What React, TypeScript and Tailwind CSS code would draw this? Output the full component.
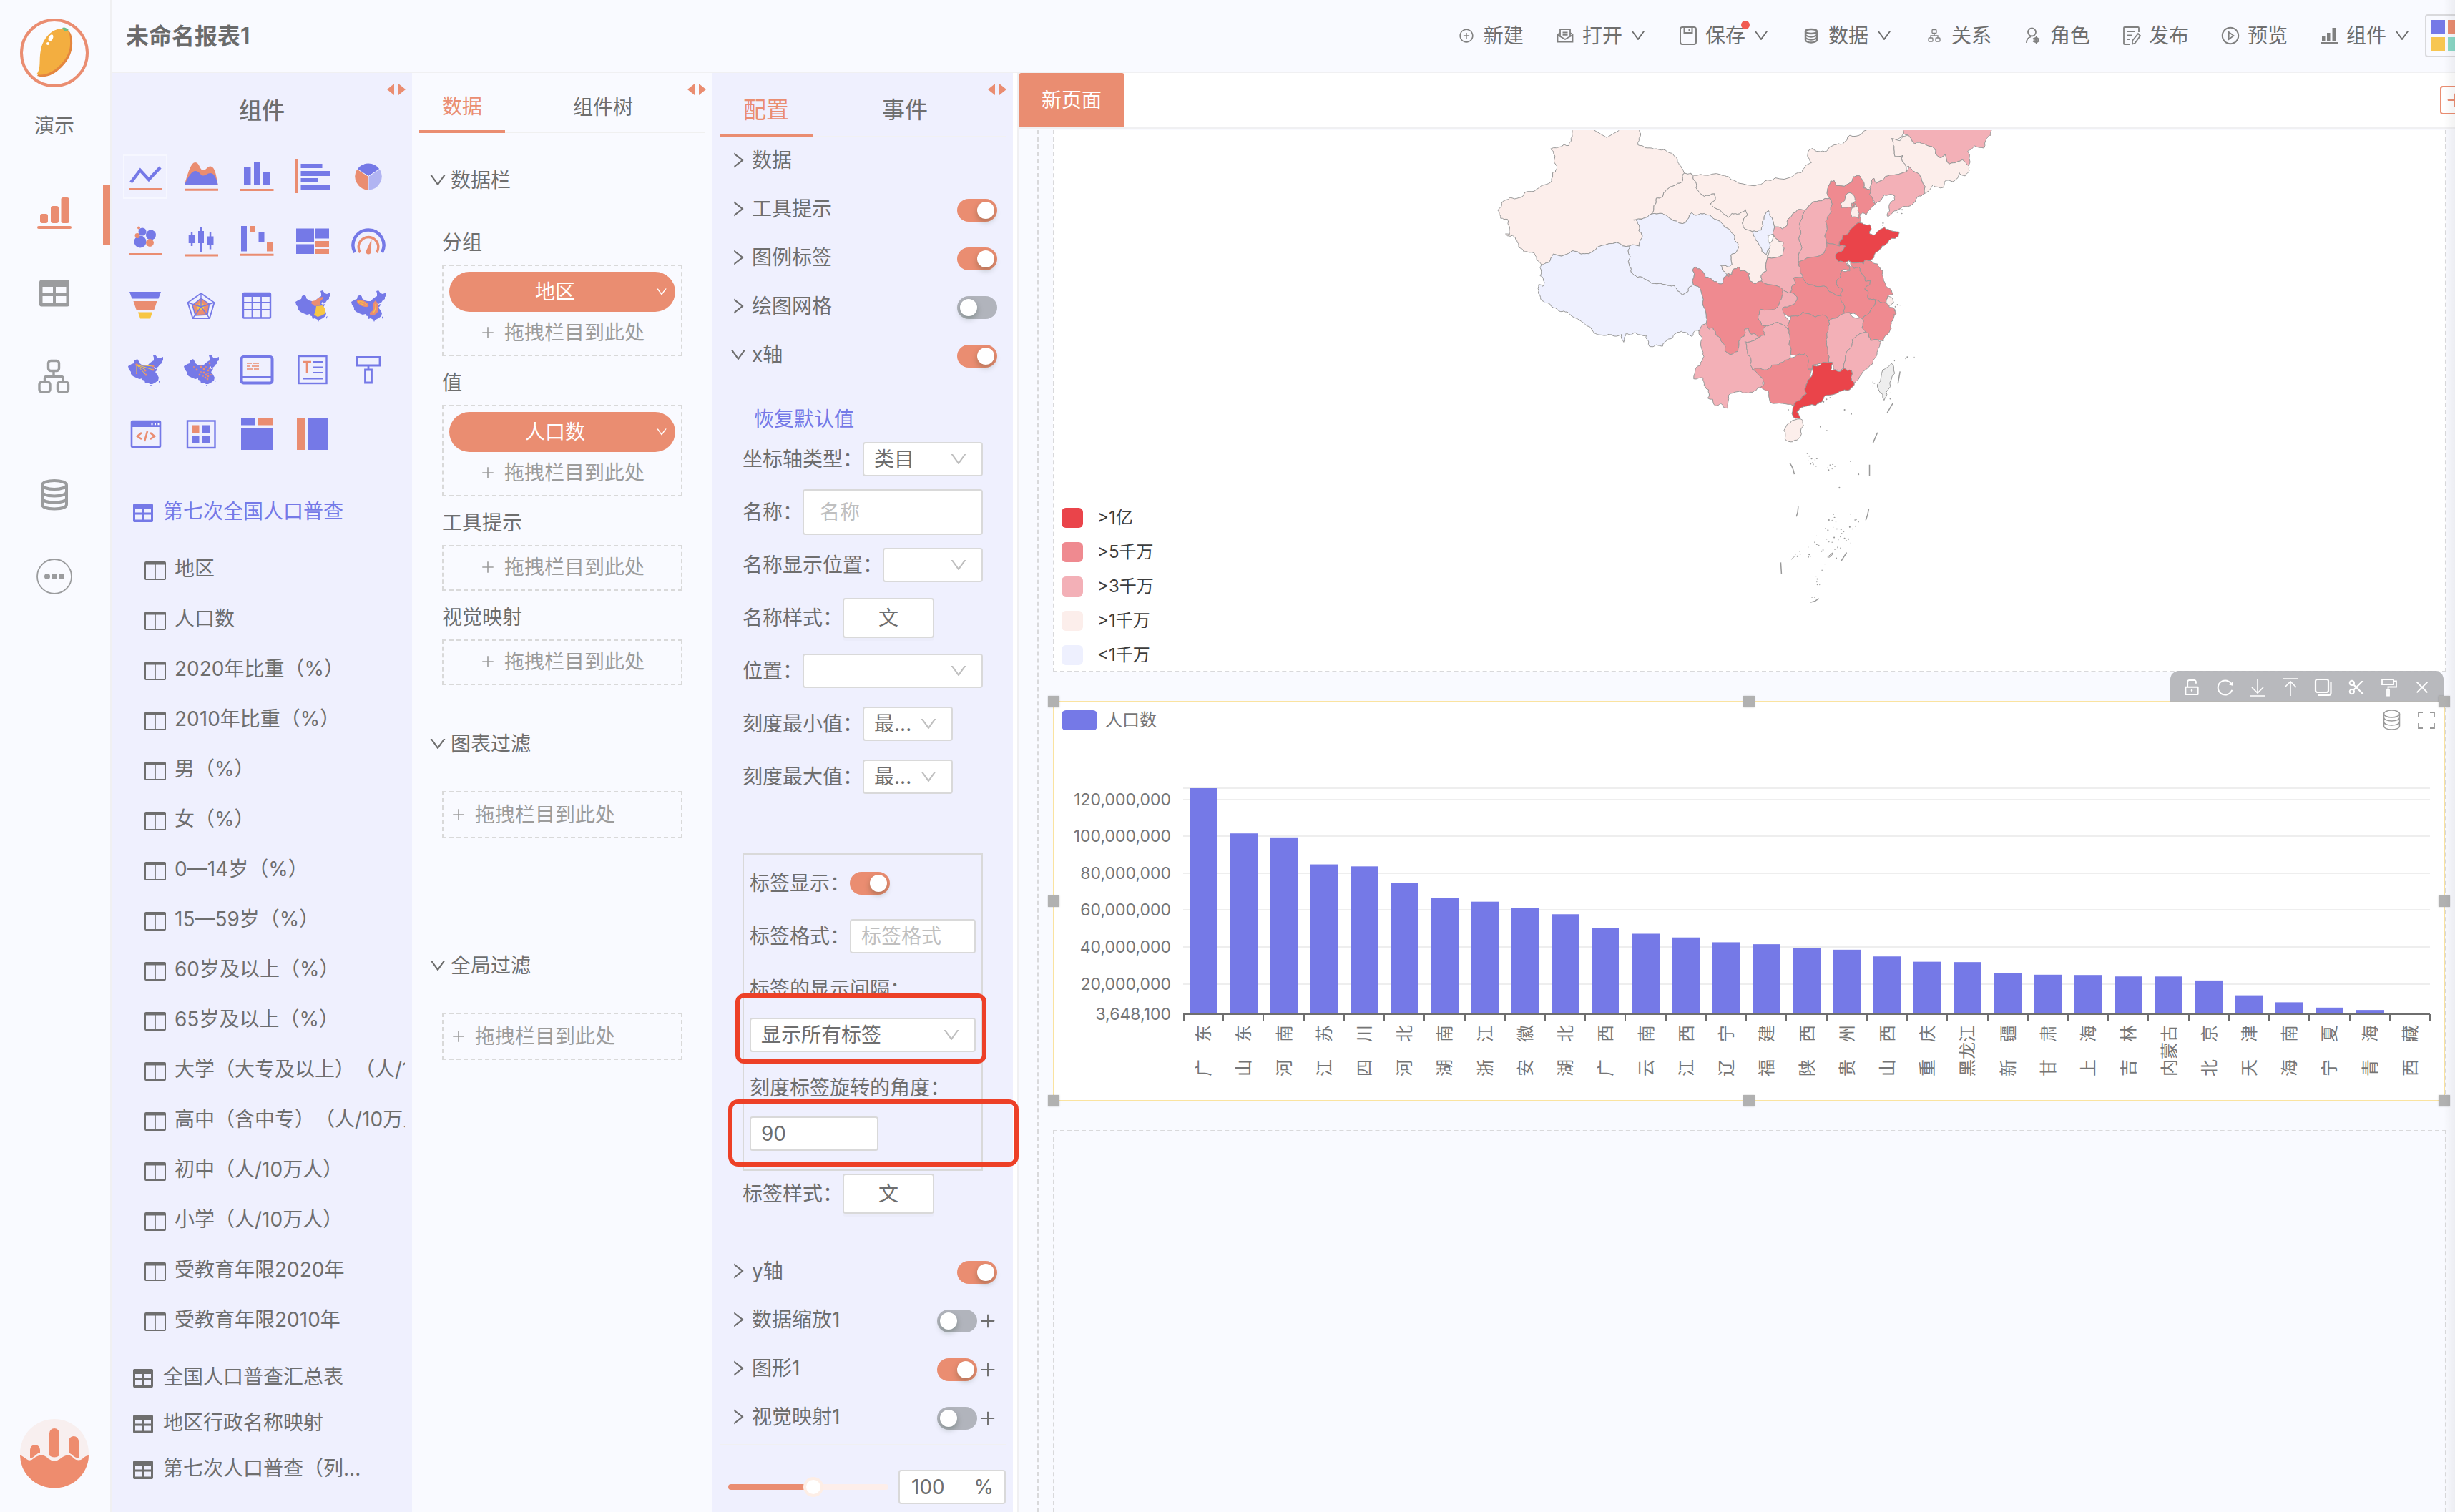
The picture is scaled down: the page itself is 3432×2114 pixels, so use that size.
import React from "react";
import {
  AiOutlineDown,
  AiOutlineRight,
  AiOutlinePlus,
  AiOutlinePlusCircle,
  AiOutlinePlayCircle,
  AiOutlineUnlock,
  AiOutlineReload,
  AiOutlineScissor,
  AiOutlineClose,
} from "react-icons/ai";

const P = "#7579e7";
const O = "#ea8d71";
const Y = "#f7c643";

/* ---------- map of population by province ---------- */

type Region = { id: string; fill: string; pts: string };

const C1 = "#ea444a";
const C2 = "#ef8a90";
const C3 = "#f3b0b7";
const C4 = "#fceeeb";
const C5 = "#eef0fe";

const regions: Region[] = [
  { id: "xinjiang", fill: C4, pts: "288,40 285,68 275,97 262,94 255,100 222,108 230,115 232,145 240,170 236,180 228,182 225,208 205,220 175,240 148,244 142,256 118,264 105,260 82,275 78,290 70,300 78,325 98,328 100,345 104,375 92,374 98,380 112,378 125,395 130,415 145,430 175,434 182,455 196,471 215,464 230,437 262,440 283,427 300,430 310,437 332,436 352,424 370,410 412,401 450,412 480,412 482,392 487,380 476,362 479,352 468,330 490,325 512,312 520,285 527,262 545,258 548,245 562,232 580,222 600,212 603,188 608,184 600,168 588,148 582,132 566,120 548,110 520,108 495,104 474,95 481,68 480,40" },
  { id: "gansu", fill: C4, pts: "608,184 626,184 635,205 642,230 655,248 665,256 695,248 697,268 682,280 690,288 710,298 735,322 745,310 760,312 785,298 790,315 775,340 778,352 803,366 812,385 820,400 832,430 845,438 848,448 892,440 896,418 893,400 872,388 866,378 848,448 845,490 832,500 830,522 812,530 798,522 795,498 770,490 765,478 750,484 745,500 738,508 720,490 712,472 738,478 745,470 742,440 760,425 763,405 750,375 735,358 715,340 695,328 665,310 645,315 628,308 622,315 620,325 612,338 575,332 560,320 545,310 512,312 520,285 527,262 545,258 548,245 562,232 580,222 600,212 603,188" },
  { id: "innermongolia", fill: C4, pts: "626,184 665,190 712,188 735,194 755,208 800,222 812,223 840,208 870,198 920,194 945,182 955,165 975,150 963,130 967,112 978,106 995,115 1018,115 1040,95 1065,92 1085,65 1120,60 1125,52 1237,40 1240,60 1235,70 1210,78 1206,75 1213,100 1216,132 1238,128 1248,165 1250,178 1200,190 1180,205 1162,215 1155,200 1148,205 1145,237 1125,230 1118,200 1110,190 1095,195 1090,212 1045,222 1040,207 1030,208 1022,230 1027,262 1005,270 985,272 965,290 957,300 935,298 910,325 905,345 890,358 868,352 866,345 855,318 850,300 845,305 833,335 830,362 803,366 778,352 775,340 790,315 785,298 760,312 745,310 735,322 710,298 690,288 682,280 697,268 695,248 665,256 655,248 642,230 635,205" },
  { id: "tibet", fill: C5, pts: "196,471 215,464 230,437 262,440 283,427 300,430 310,437 332,436 352,424 370,410 412,401 450,412 446,425 452,445 450,475 455,495 472,510 500,518 530,530 560,535 580,536 588,552 603,564 618,555 622,540 634,532 650,540 663,580 670,620 672,650 660,660 652,680 640,676 630,695 610,682 588,682 575,698 552,712 545,726 508,727 505,712 498,692 480,690 466,682 455,690 440,685 433,713 428,688 405,694 390,688 362,690 345,680 320,655 300,640 270,618 250,617 230,605 205,590 193,572 186,545 188,532 200,538 204,525 192,505 192,480" },
  { id: "qinghai", fill: C5, pts: "460,330 490,325 512,312 545,310 560,320 575,332 612,338 620,325 622,315 628,308 645,315 665,310 695,328 715,340 735,358 750,375 763,405 760,425 742,440 745,470 738,478 712,472 720,490 732,505 722,510 720,528 708,530 690,520 668,510 655,485 640,478 632,488 634,532 622,540 618,555 603,564 588,552 580,536 560,535 530,530 500,518 472,510 455,495 450,475 452,445 446,425 450,412 480,412 482,392 487,380 476,362 479,352 468,330" },
  { id: "ningxia", fill: C5, pts: "850,300 855,318 866,345 864,375 848,378 850,398 856,410 848,425 845,438 832,430 820,400 812,385 803,366 830,362 833,335 845,305" },
  { id: "heilongjiang", fill: C3, pts: "1237,40 1240,60 1262,75 1272,92 1300,92 1328,105 1345,135 1360,125 1372,155 1395,148 1410,142 1428,160 1425,115 1445,98 1472,105 1480,75 1492,65 1495,40" },
  { id: "jilin", fill: C4, pts: "1206,75 1213,100 1216,132 1238,128 1248,165 1255,162 1278,182 1292,205 1300,248 1312,240 1325,220 1355,228 1360,208 1382,210 1398,195 1400,180 1418,192 1428,180 1428,160 1410,142 1395,148 1372,155 1360,125 1345,135 1328,105 1300,92 1272,92 1262,75 1250,65 1237,68 1230,82" },
  { id: "liaoning", fill: C3, pts: "1155,200 1162,215 1180,205 1200,190 1250,178 1255,162 1278,182 1292,205 1300,248 1280,258 1262,285 1240,288 1225,298 1205,312 1195,320 1192,315 1200,300 1198,288 1215,268 1215,255 1200,250 1185,252 1172,272 1158,280 1150,262 1142,250 1145,237 1148,205" },
  { id: "hebei", fill: C2, pts: "1022,230 1030,208 1040,207 1045,222 1090,212 1095,195 1110,190 1118,200 1125,230 1145,237 1142,250 1158,280 1145,295 1132,315 1122,308 1115,312 1112,338 1092,355 1065,378 1055,398 1055,412 1018,402 1020,360 1015,335 1020,320 1032,305 1034,280 1027,262" },
  { id: "beijing", fill: C4, pts: "1085,245 1098,255 1102,270 1090,292 1060,292 1058,278 1070,270 1072,255" },
  { id: "tianjin", fill: C4, pts: "1102,278 1110,292 1112,310 1112,325 1092,322 1090,295 1100,290" },
  { id: "shanxi", fill: C3, pts: "957,300 965,290 985,272 1005,270 1027,262 1034,280 1032,305 1020,320 1015,335 1020,360 1018,402 1015,425 1005,438 970,448 938,462 937,440 945,410 940,380 942,350 948,325" },
  { id: "shaanxi", fill: C3, pts: "935,298 957,300 948,325 942,350 940,380 945,410 937,440 938,462 942,480 950,510 922,512 928,530 918,538 915,558 892,548 870,535 830,522 832,500 845,490 848,448 892,440 896,418 893,400 872,388 866,378 868,352 890,358 905,345 910,325" },
  { id: "shandong", fill: C1, pts: "1112,338 1130,345 1142,345 1147,358 1142,372 1155,378 1170,362 1185,352 1200,362 1227,368 1225,382 1205,388 1195,402 1178,412 1170,425 1158,435 1145,458 1132,455 1125,468 1100,465 1082,458 1072,462 1052,462 1044,440 1058,430 1072,412 1055,412 1055,398 1065,378 1092,355" },
  { id: "henan", fill: C2, pts: "1018,402 1055,412 1072,412 1058,430 1044,440 1052,462 1072,462 1088,480 1062,488 1058,510 1048,518 1052,540 1065,548 1060,568 1040,562 1018,540 985,538 960,528 950,510 942,480 938,462 970,448 1005,438 1015,425" },
  { id: "jiangsu", fill: C2, pts: "1082,458 1100,465 1125,468 1132,455 1145,458 1165,468 1180,490 1188,530 1205,550 1210,562 1195,568 1190,590 1172,588 1158,580 1140,578 1138,555 1128,545 1140,535 1145,520 1130,522 1120,500 1112,478 1098,482" },
  { id: "anhui", fill: C2, pts: "1078,465 1098,482 1112,478 1120,500 1130,522 1145,520 1140,535 1128,545 1138,555 1140,578 1158,580 1145,612 1122,640 1095,622 1072,625 1070,600 1060,568 1065,548 1052,540 1048,518 1058,510 1062,488 1085,490" },
  { id: "zhejiang", fill: C2, pts: "1158,580 1172,588 1190,590 1215,610 1218,625 1205,650 1205,670 1192,690 1182,710 1165,705 1145,708 1138,685 1120,668 1122,640 1145,612" },
  { id: "shanghai", fill: C4, pts: "1195,568 1208,575 1212,590 1200,598 1190,590" },
  { id: "hubei", fill: C2, pts: "922,512 950,510 960,528 985,538 1018,540 1040,562 1060,568 1070,600 1072,625 1050,635 1025,648 1015,630 985,635 970,625 950,618 935,632 915,632 897,625 892,605 915,598 932,582 930,568 915,558 918,538 928,530" },
  { id: "chongqing", fill: C3, pts: "892,548 915,558 930,568 932,582 915,598 892,605 897,625 912,645 910,678 895,660 878,650 860,658 845,662 830,660 820,638 828,610 850,612 868,612 882,590 892,562" },
  { id: "sichuan", fill: C2, pts: "634,532 632,488 640,478 655,485 668,510 690,520 708,530 720,528 722,510 745,500 750,484 765,478 770,490 795,498 798,522 812,530 830,522 870,535 892,548 892,562 882,590 868,612 850,612 828,610 820,638 830,660 845,662 835,672 840,692 822,698 815,690 800,688 792,668 782,672 780,695 765,710 762,742 740,752 725,740 718,715 700,692 690,668 680,672 672,650 670,620 663,580 650,540" },
  { id: "yunnan", fill: C3, pts: "672,650 680,672 690,668 700,692 718,715 725,740 740,752 762,742 765,710 780,695 782,672 792,668 800,688 815,690 822,698 810,708 782,712 790,740 800,765 805,800 822,815 838,830 835,848 820,855 805,870 780,872 762,868 735,880 733,920 722,918 712,905 698,912 690,892 675,888 678,862 665,850 662,825 635,828 640,795 660,770 662,745 660,700 650,680 660,660" },
  { id: "guizhou", fill: C3, pts: "845,662 860,658 878,650 895,660 910,678 912,690 910,720 915,752 912,768 885,778 860,785 845,800 820,795 805,800 800,765 790,740 782,712 810,708 822,698 840,692 835,672" },
  { id: "hunan", fill: C2, pts: "915,632 935,632 950,618 970,625 985,635 1015,630 1025,648 1022,680 1017,705 1022,740 1025,778 1000,780 978,785 975,798 965,798 955,750 935,752 915,752 910,720 912,690 910,678 912,645" },
  { id: "jiangxi", fill: C3, pts: "1025,648 1050,635 1085,620 1095,635 1122,640 1120,668 1130,682 1110,690 1092,705 1088,730 1072,760 1068,795 1058,802 1040,800 1030,778 1025,778 1022,740 1017,705 1022,680" },
  { id: "fujian", fill: C3, pts: "1130,682 1138,685 1145,708 1165,705 1175,712 1165,740 1160,760 1150,782 1130,800 1110,830 1098,840 1090,802 1068,795 1072,760 1088,730 1092,705 1110,690" },
  { id: "guangxi", fill: C2, pts: "805,800 820,795 845,800 860,785 885,778 915,762 935,752 955,750 965,798 975,798 972,825 960,845 960,875 940,895 922,912 890,905 855,900 850,865 828,855 838,840 835,828 822,815" },
  { id: "guangdong", fill: C1, pts: "978,785 1000,785 1008,776 1038,778 1030,800 1055,805 1068,795 1090,802 1098,840 1085,862 1055,868 1015,880 1005,900 965,912 940,922 932,932 942,948 940,953 928,952 920,930 925,905 940,895 960,875 960,845 972,825" },
  { id: "hainan", fill: C4, pts: "905,970 920,958 950,958 952,975 942,1010 920,1025 898,1015 895,990" },
  { id: "taiwan", fill: "#eeeeee", pts: "1205,780 1212,790 1205,830 1190,870 1184,895 1168,862 1165,845 1180,800" },
];

type Pt = [number, number];

/* Adds small notches to a straight border. The result does not depend on the
   direction of travel, so neighbouring provinces share the same line. */
function roughen(a: Pt, b: Pt, depth: number): Pt[] {
  const len = Math.hypot(b[0] - a[0], b[1] - a[1]);
  if (depth === 0 || len < 7) return [b];
  const flip = a[0] > b[0] || (a[0] === b[0] && a[1] > b[1]);
  const [p, q] = flip ? [b, a] : [a, b];
  const s = Math.sin(p[0] * 12.98 + p[1] * 78.23 + q[0] * 37.71 + q[1] * 9.17) * 43758.5;
  const k = (s - Math.floor(s) - 0.5) * 0.34;
  const m: Pt = [
    (p[0] + q[0]) / 2 - (q[1] - p[1]) * k,
    (p[1] + q[1]) / 2 + (q[0] - p[0]) * k,
  ];
  return [...roughen(a, m, depth - 1), ...roughen(m, b, depth - 1)];
}

function outline(pts: string) {
  const list = pts.split(" ").map((s) => s.split(",").map(Number) as Pt);
  const out: Pt[] = [list[0]];
  list.forEach((p, i) => out.push(...roughen(p, list[(i + 1) % list.length], 2)));
  return "M" + out.map(([x, y]) => `${x.toFixed(1)} ${y.toFixed(1)}`).join("L") + "Z";
}

const seaLines =
  "M1230 805L1224 843M1209 905L1193 934M1165 996L1152 1029M1142 1097V1131M1140 1235Q1137 1255 1131 1271M1076 1372L1060 1399M996 1516L985 1524L972 1528M886 1403L888 1438M936 1226Q937 1244 931 1259M912 1092Q922 1106 925 1127";

const islets =
  "963,1062 968,1070 966,1085 975,1078 978,1090 985,1082 990,1078 980,1096 988,1102 972,1094 1022,1105 1028,1098 1036,1096 1042,1102 1034,1110 1024,1114 1087,1087 1111,1127 1055,1168 1000,978 1019,989 1070,925 1069,928 1090,938 908,925 1214,771 1246,765 1251,760 1271,760 1152,838 1156,842 1152,850 1201,872 1202,890 1228,295 1236,298 1235,310 1222,306 1220,300 1181,340 1180,347 1216,602 1230,597 1222,596 1214,615 1218,622 1213,626 1038,1252 1041,1262 1034,1272 1045,1276 1025,1270 1088,1253 1100,1270 1110,1276 1104,1268 1015,1296 1022,1302 1037,1293 1048,1298 1060,1300 1068,1306 1062,1312 1085,1292 1092,1298 1102,1290 1018,1330 1025,1338 1034,1340 1040,1325 1052,1332 1058,1322 1075,1335 1082,1330 1088,1342 1070,1328 989,1320 984,1340 990,1347 996,1350 965,1355 968,1378 972,1384 966,1386 1008,1364 1004,1368 928,1378 934,1384 940,1368 942,1378 1042,1362 1050,1356 1058,1358 1046,1390 1013,1408 1005,1428 988,1446 991,1455 990,1464 992,1472 998,1473 976,1512 984,1512 1022,880 1028,886 1018,892 995,905 1010,900";

function ChinaMap() {
  return (
    <svg
      viewBox="0 49 1568 1519"
      preserveAspectRatio="none"
      className="h-[678px] w-[760px]"
      role="img"
      aria-label="人口数地图"
    >
      <g stroke="#999999" strokeWidth="1" strokeLinejoin="round">
        {regions.map((r) => (
          <path key={r.id} d={outline(r.pts)} fill={r.fill} vectorEffect="non-scaling-stroke" />
        ))}
      </g>
      <path d="M1090 278l8 0l-2 12l-6 -3z M733 497l5 2l-2 9l-4 -4z" fill={C2} stroke="#999" vectorEffect="non-scaling-stroke" />
      <path d="M1021 1386L1035 1373L1034 1380L1026 1387ZM916 1394L926 1384" fill="#e5e0e0" stroke="#999" vectorEffect="non-scaling-stroke" />
      <path d={seaLines} fill="none" stroke="#999999" strokeWidth="1.500" vectorEffect="non-scaling-stroke" />
      {islets.split(" ").map((s, i) => {
        const [x, y] = s.split(",").map(Number);
        return <ellipse key={i} cx={x} cy={y} rx={i % 3 ? 1.4 : 2.2} ry={i % 2 ? 2.4 : 1.5} fill="#999999" />;
      })}
    </svg>
  );
}

const mapLegend = [
  { label: ">1亿", box: "bg-[#ea444a]" },
  { label: ">5千万", box: "bg-[#ef8a90]" },
  { label: ">3千万", box: "bg-[#f3b0b7]" },
  { label: ">1千万", box: "bg-[#fceeeb]" },
  { label: "<1千万", box: "bg-[#eef0fe]" },
];

/* ---------- bar chart ---------- */

const population: [string, number][] = [
  ["广　东", 126012510], ["山　东", 101527453], ["河　南", 99365519], ["江　苏", 84748016],
  ["四　川", 83674866], ["河　北", 74610235], ["湖　南", 66444864], ["浙　江", 64567588],
  ["安　徽", 61027171], ["湖　北", 57752557], ["广　西", 50126804], ["云　南", 47209277],
  ["江　西", 45188635], ["辽　宁", 42591407], ["福　建", 41540086], ["陕　西", 39528999],
  ["贵　州", 38562148], ["山　西", 34915616], ["重　庆", 32054159], ["黑龙江", 31850088],
  ["新　疆", 25852345], ["甘　肃", 25019831], ["上　海", 24870895], ["吉　林", 24073453],
  ["内蒙古", 24049155], ["北　京", 21893095], ["天　津", 13866009], ["海　南", 10081232],
  ["宁　夏", 7202654], ["青　海", 5923957], ["西　藏", 3648100],
];

function BarChart() {
  const left = 180;
  const right = 1923;
  const base = 379;
  const top = 63;
  const min = 3648100;
  const max = 126012510;
  const yOf = (v: number) => base - ((v - min) / (max - min)) * (base - top);
  const step = (right - left) / population.length;
  const ticks = [120000000, 100000000, 80000000, 60000000, 40000000, 20000000, min];
  return (
    <svg viewBox="0 0 1942 499" className="block w-full" role="img" aria-label="各地区人口数柱状图">
      <g fill="#eeeeee">
        <rect x={left} y={top - 1} width={right - left} height="2" />
        {ticks.slice(0, 6).map((t) => (
          <rect key={t} x={left} y={Math.round(yOf(t)) - 1} width={right - left} height="2" />
        ))}
      </g>
      <g fill={P}>
        {population.map(([name, v], i) => (
          <rect key={name} x={Math.round(left + i * step + 9)} y={yOf(v)} width="39" height={base - yOf(v)} />
        ))}
      </g>
      <g fill="#6e6e6e">
        <rect x={left} y={base - 1} width={right - left} height="2" />
        {Array.from({ length: population.length + 1 }, (_, i) => (
          <rect key={i} x={Math.round(left + i * step) - (i ? 1 : 0)} y={base} width="2" height="10" />
        ))}
      </g>
      <g fill="#757575" fontSize="23" textAnchor="end">
        {ticks.map((t) => (
          <text key={t} x={left - 17} y={yOf(t) + 8}>
            {t.toLocaleString("en-US")}
          </text>
        ))}
      </g>
      <g fill="#757575" fontSize="24" textAnchor="end">
        {population.map(([name], i) => (
          <text key={name} transform={`translate(${left + (i + 0.5) * step + 9} ${base + 15}) rotate(-90)`}>
            {name}
          </text>
        ))}
      </g>
    </svg>
  );
}

/* ---------- component palette icons ---------- */

const china =
  "M0 19L5 16L8 15L9 11L13 9L15 12L15 14L19 17L23 18L27 18L30 15L34 12L36 11L36 7L35 4L38 3L41 7L44 8L49 6L49 11L47 12L47 15L44 17L42 20L38 22L38 19L36 21L38 23L41 22L40 25L38 27L41 31L43 35L42 39L38 42L34 44L31 44L27 42L24 43L23 39L20 38L20 36L16 37L11 35L7 33L4 30L4 27L1 23ZM31 45L33 45L32 47ZM43 40L45 39L43 43Z";

const palette: { name: string; art: React.ReactNode }[] = [
  { name: "折线图", art: <><path d="M4 32L17 15L29 28L45 11" fill="none" stroke={P} strokeWidth="4.4" /><path d="M1 41.5H48" stroke={O} strokeWidth="3" /></> },
  { name: "面积图", art: <><path d="M1 35C6 18 10 4 16 4C22 4 22 15 27 15C31 15 33 9.500 37 9.500C44 9.500 46 26 47.500 35Z" fill={O} /><path d="M1 35C6 24 11 16 16 16C22 16 23 22.500 27 22.500C31 22.500 33 19 37 19C43 19 46 28 47.500 35Z" fill={P} /><path d="M1 42.300H48" stroke={O} strokeWidth="3" /></> },
  { name: "柱状图", art: <><path d="M6 11h9.500v25H6zM20 3h9v33h-9zM33 18h9v18h-9z" fill={P} /><path d="M1 42.500H47.500" stroke={O} strokeWidth="3" /></> },
  { name: "条形图", art: <><path d="M-1 0h4v47h-4z" fill={O} /><path d="M7.500 6h30v6h-30zM7.500 16h41v7h-41zM7.500 26h24.500v6H7.500zM7.500 36h41v6h-41z" fill={P} /></> },
  { name: "饼图", art: <><path d="M24 23.500L8.500 13.500A19 19 0 0 1 39.500 13.500Z" fill={P} /><path d="M24 23.500V42.500A19 19 0 0 1 8.200 13.500Z" fill={O} /><path d="M24 23.500V42.500A19 19 0 0 0 39.800 13.500Z" fill="#b1b4f2" /><path d="M24 43V23.500M8 13L24 23.500L40 13" fill="none" stroke="#eff0fe" strokeWidth="1" /></> },
  { name: "散点图", art: <><circle cx="17" cy="25" r="8.500" fill={P} /><circle cx="32" cy="15.500" r="7" fill={P} /><circle cx="20" cy="11" r="5.500" fill={P} /><circle cx="30.500" cy="26.500" r="5.400" fill={O} /><circle cx="13" cy="16.500" r="3.400" fill={O} /><circle cx="15" cy="5.500" r="2" fill={O} /><path d="M1 42.500H48" stroke={O} strokeWidth="3" /></> },
  { name: "K线图", art: <><path d="M6.700 15h8.500v12H6.700zM9.800 12h2.500v19H9.800zM20 10h8v17h-8zM22.700 4h2.600v36h-2.600zM32.500 17.500h9v12h-9zM35.800 11h2.500v24.500h-2.500z" fill={P} /><path d="M1 44H48" stroke={O} strokeWidth="3" /></> },
  { name: "瀑布图", art: <><path d="M2 3h8v35.500H2zM26.500 11h8v15h-8z" fill={P} /><path d="M14.500 3h7.500v9h-7.500zM38 25.500h8v13h-8z" fill={O} /><path d="M1 43.300H47.500" stroke={O} strokeWidth="3" /></> },
  { name: "矩形树图", art: <><path d="M1 6.500h25v19H1zM1 28.500h25V42H1zM28 6.500h19v14H28z" fill={P} /><path d="M28 24h19v8.500H28zM28 35h19v7H28z" fill={O} /></> },
  { name: "仪表盘", art: <><path d="M5 40A21.500 21.500 0 1 1 43 40" fill="none" stroke={P} strokeWidth="4.400" /><path d="M12.500 40A13.800 13.800 0 1 1 35.500 40" fill="none" stroke={O} strokeWidth="3.400" /><path d="M28.500 21L27.500 40A3.600 3.600 0 0 1 20.500 38.500Z" fill={O} /></> },
  { name: "漏斗图", art: <><path d="M2 5H46L42.500 14.500H5.500Z" fill={P} /><path d="M7.500 18H40.500L36.500 30H11.500Z" fill={O} /><path d="M14 33.500H34L31 42.500H17Z" fill={Y} /></> },
  { name: "雷达图", art: <><path d="M24 7L42.500 20L36 42H12.500L5.500 20Z" fill="none" stroke={P} strokeWidth="1.800" /><path d="M24 14L35.500 22L33 37L16 38L12 24Z" fill={O} stroke={P} strokeWidth="1.500" /><path d="M24 19L29 24L27 30L20 31L18 25Z" fill={Y} /><path d="M24 7V26L42.500 20M24 26L36 42M24 26L12.500 42M24 26L5.500 20" fill="none" stroke={P} strokeWidth="1.400" /></> },
  { name: "表格", art: <><rect x="5" y="7" width="38" height="34.500" rx="1" fill="none" stroke={P} strokeWidth="2.400" /><path d="M4 6H44V12H4Z" fill={P} /><path d="M5 20H43M5 30H43M17.500 12V41M30 12V41" stroke={P} strokeWidth="1.800" /></> },
  { name: "区域地图", art: <><path d={china} fill={P} /><path d="M23 18L28 17L33 13L39 12L38 15L35 18L34 24L27 25L22 21Z" fill={O} /><path d="M29 25L38 24L42 29L42 35L37 38L31 40L26 37L28 32Z" fill={Y} /></> },
  { name: "热力地图", art: <><path d={china} fill={P} /><ellipse cx="16" cy="21" rx="9" ry="3.800" transform="rotate(25 16 21)" fill={O} /><ellipse cx="16" cy="21" rx="6" ry="1.600" transform="rotate(25 16 21)" fill="none" stroke={Y} strokeWidth="1" /><path d="M34 17Q38 21 38 30Q37 36 30 38Q25 38 26 34Q33 31 30 25Q30 20 34 17Z" fill={O} /><path d="M34 22Q35 30 30 35" fill="none" stroke={Y} strokeWidth="1.300" /></> },
  { name: "路径地图", art: <><path d={china} fill={P} /><path d="M12 17L35 19M12 17L35 24M12 17L24 24M12 17L25 31M12 17L12 29" stroke={Y} strokeWidth="1" /><g fill={O}><circle cx="12" cy="17" r="1.800" /><circle cx="35" cy="19" r="1.500" /><circle cx="35" cy="24" r="1.500" /><circle cx="24" cy="25" r="1.500" /><circle cx="25" cy="31" r="1.500" /><circle cx="12" cy="29" r="1.200" /></g></> },
  { name: "散点地图", art: <><path d={china} fill={P} /><g fill={O}>{["14,20", "18,24", "24,20", "24,27", "28,23", "28,28", "31,20", "31,31", "34,25", "34,29", "30,35", "36,22", "38,31", "33,37", "22,31", "27,33", "36,15", "34,33"].map((s, i) => { const [x, y] = s.split(","); return <circle key={s} cx={x} cy={y} r={i % 3 === 0 ? 0.9 : 1.4} />; })}</g></> },
  { name: "标签卡", art: <><rect x="2.500" y="6" width="43" height="36.500" rx="3" fill="none" stroke={P} strokeWidth="4" /><path d="M3 34H45" stroke={P} strokeWidth="2" /><path d="M10 15H17M19 15H27M10 19H15M17 19H27M10 23H18M20 23H27" stroke={O} strokeWidth="1.500" /></> },
  { name: "文本", art: <><rect x="4.500" y="5" width="39" height="38" fill="none" stroke={P} strokeWidth="2.400" /><path d="M10 13H22M16 13V29" stroke={O} strokeWidth="2.600" fill="none" /><path d="M24 13H39M24 20.500H39M24 28H39M10 36.500H39" stroke={P} strokeWidth="2" /></> },
  { name: "格式刷", art: <path d="M8 6.500H40V18H8ZM24 18V24M19.500 24H28.500V42H19.500Z" fill="none" stroke={P} strokeWidth="2.800" /> },
  { name: "网页", art: <><rect x="5" y="6" width="40" height="36" rx="1.500" fill="none" stroke={P} strokeWidth="2.600" /><path d="M4 5.500H46V14H4Z" fill={P} /><path d="M32.500 10h2M37 10h2M41.500 10h2" stroke="#fff" strokeWidth="2.400" /><path d="M19 22L13 27L19 31M31 22L37 27L31 31M27 20L23 34" fill="none" stroke={O} strokeWidth="2.600" /></> },
  { name: "宫格", art: <><rect x="5" y="5.500" width="38.500" height="37.500" fill="none" stroke={P} strokeWidth="2.400" /><path d="M11.500 11.500h10V22h-10z" fill={O} /><path d="M26 11.500h11V22H26zM11.500 26.500h10V37h-10zM26 26.500h11V37H26z" fill={P} /></> },
  { name: "标签页", art: <><path d="M2 2h19v9.500H2zM2 15.500h44V46H2z" fill={P} /><path d="M25 2h21v9.500H25z" fill={O} /></> },
  { name: "侧栏", art: <><path d="M2 2h12v44H2z" fill={O} /><path d="M17 2h29v44H17z" fill={P} /></> },
];

function CollapseArrows() {
  return (
    <button type="button" aria-label="折叠面板" className="absolute top-[15px] right-[9px]">
      <svg width="26" height="16" viewBox="0 0 26 16" fill={O}>
        <path d="M0 8L10 0V16ZM26 8L16 0V16Z" />
      </svg>
    </button>
  );
}

/* ---------- left rail ---------- */

function Rail() {
  const btn = "relative flex h-[84px] w-full items-center justify-center pr-[2px] text-[#9b9c9e]";
  return (
    <nav className="flex w-[156px] shrink-0 flex-col items-center border-r-2 border-[#f0f0f2]">
      <svg width="96" height="96" viewBox="0 0 96 96" className="mt-[26px] mr-[2px] shrink-0" role="img" aria-label="头像">
        <circle cx="48" cy="48" r="46" fill="#f9faff" stroke={O} strokeWidth="4" />
        <path d="M24 80C32 70 27 58 30 44C33 28 45 14 60 14C68 14 72 20 73 30C74 44 70 56 58 68C48 78 36 84 24 80Z" fill="#e4863f" />
        <path d="M23 78C30 70 26 58 29 44C32 28 44 14 59 14C67 14 70 20 70 30C71 43 67 54 56 65C46 75 35 80 23 78Z" fill="#f3ae40" />
        <path d="M59 13Q63 11 68 16L62 18Z" fill="#6cbf84" />
        <ellipse cx="43" cy="27" rx="3" ry="5" fill="#fff" transform="rotate(25 43 27)" />
        <circle cx="39" cy="35" r="2" fill="#fff" />
      </svg>
      <span className="mt-8 mr-[2px] text-[28px] leading-[44px]">演示</span>
      <div className="mt-[60px] flex w-full flex-col gap-[29px]">
        <button type="button" aria-label="图表" className={btn}>
          <svg width="48" height="48" viewBox="0 0 48 48" fill={O}>
            <rect x="4" y="23" width="11" height="13" rx="3" /><rect x="19" y="12" width="11" height="24" rx="3" /><rect x="33.500" y="0" width="11" height="36" rx="2.500" /><rect x="0" y="40" width="48" height="4" rx="2" />
          </svg>
          <span className="absolute inset-y-0 right-0 w-[10px] bg-[#ea8d71]" />
        </button>
        <button type="button" aria-label="表格" className={btn}>
          <svg width="48" height="48" viewBox="0 0 48 48" fill="currentColor">
            <path fillRule="evenodd" d="M6 2.500H42Q45 2.500 45 5.500V36.500Q45 39.500 42 39.500H6Q3 39.500 3 36.500V5.500Q3 2.500 6 2.500ZM7.500 12V21H22V12ZM26 12V21H40.500V12ZM7.500 25V35H22V25ZM26 25V35H40.500V25Z" />
          </svg>
        </button>
        <button type="button" aria-label="关系" className={btn}>
          <svg width="48" height="48" viewBox="0 0 48 48" fill="none" stroke="currentColor" strokeWidth="3.400">
            <rect x="15.500" y="2.500" width="15" height="14" rx="3.500" /><rect x="3" y="32" width="15" height="14" rx="3.500" /><rect x="28.500" y="32" width="15" height="14" rx="3.500" /><path d="M23 17V24M10.500 31V27Q10.500 24.500 13 24.500H33.500Q36 24.500 36 27V31" />
          </svg>
        </button>
      </div>
      <div className="mt-[82px] flex w-full flex-col gap-[30px]">
        <button type="button" aria-label="数据" className={btn}>
          <svg width="48" height="48" viewBox="0 0 48 48" fill="none" stroke="currentColor" strokeWidth="4">
            <ellipse cx="24" cy="10" rx="17" ry="6" /><path d="M7 10V37C7 41.500 15 43.500 24 43.500S41 41.500 41 37V10M7 19C7 23.500 15 25.500 24 25.500S41 23.500 41 19M7 28C7 32.500 15 34.500 24 34.500S41 32.500 41 28" />
          </svg>
        </button>
        <button type="button" aria-label="更多" className={btn}>
          <svg width="50" height="50" viewBox="0 0 50 50">
            <circle cx="25" cy="25" r="24" fill="none" stroke="currentColor" strokeWidth="1.800" /><g fill="currentColor"><circle cx="15" cy="25" r="4" /><circle cx="25" cy="25" r="4" /><circle cx="35" cy="25" r="4" /></g>
          </svg>
        </button>
      </div>
      <svg width="96" height="96" viewBox="0 0 96 96" className="mt-auto mr-[2px] mb-[34px] shrink-0" role="img" aria-label="标志">
        <circle cx="48" cy="48" r="48" fill="#f8efef" />
        <path d="M0 50Q5 53 9 56Q14 60 19 55Q31 46 39 55Q48 62 57 55Q68 46 75 55Q82 60 88 55Q92 51 96 51A48 46 0 0 1 0 50Z" fill="#ee8c6e" />
        <path d="M14 54V43A7 7 0 0 1 28 43V47Q24 48 20 52Q17 55 14 54ZM41 51V20A7 7 0 0 1 55 20V51Q48 56 41 51ZM68 47V31A7 7 0 0 1 82 31V54Q79 55 75 52Q72 49 68 47Z" fill="#ee8c6e" />
      </svg>
    </nav>
  );
}

/* ---------- header ---------- */

function SmallDb() {
  return (
    <svg width="20" height="22" viewBox="0 0 20 22" fill="none" stroke="currentColor" strokeWidth="2.400">
      <ellipse cx="10" cy="5" rx="8" ry="3" /><path d="M2 5V17C2 19 6 20.500 10 20.500S18 19 18 17V5M2 9C2 11 6 12.500 10 12.500S18 11 18 9M2 13C2 15 6 16.500 10 16.500S18 15 18 13" />
    </svg>
  );
}

const menu: { label: string; icon: React.ReactNode; more?: boolean; dot?: boolean }[] = [
  { label: "新建", icon: <AiOutlinePlusCircle size={22} /> },
  { label: "打开", more: true, icon: <svg width="24" height="22" viewBox="0 0 24 22" fill="none" stroke="currentColor" strokeWidth="1.800"><path d="M5 7L1.500 9.500V19.500H22.500V9.500L19 7" /><path d="M5 12V2H19V12M1.500 10L12 16L22.500 10M8.500 6.500H15.500M8.500 9.800H15.500" /></svg> },
  { label: "保存", more: true, dot: true, icon: <svg width="24" height="28" viewBox="0 0 24 28" fill="none" stroke="currentColor" strokeWidth="2"><rect x="1" y="2" width="22" height="24" rx="3" /><path d="M6.500 2V10H17.500V2M13.500 4V7" /></svg> },
  { label: "数据", more: true, icon: <SmallDb /> },
  { label: "关系", icon: <svg width="18" height="20" viewBox="0 0 18 20" fill="none" stroke="currentColor" strokeWidth="1.300"><rect x="6" y="1.500" width="6" height="5" rx="1" /><rect x="1" y="13" width="6" height="5" rx="1" /><rect x="11" y="13" width="6" height="5" rx="1" /><path d="M9 6.500V10M4 13V10H14V13" /></svg> },
  { label: "角色", icon: <svg width="22" height="24" viewBox="0 0 22 24" fill="none" stroke="currentColor" strokeWidth="1.800"><circle cx="9.500" cy="7" r="5.500" /><path d="M2 22C2 17 4 14.500 8 13.500" /><circle cx="15.500" cy="18" r="3" /><path d="M15.500 13V23M11 15.500L20 20.500M20 15.500L11 20.500" strokeWidth="1.400" /></svg> },
  { label: "发布", icon: <svg width="26" height="28" viewBox="0 0 26 28" fill="none" stroke="currentColor" strokeWidth="1.800"><path d="M23 9V3Q23 2 22 2H3Q2 2 2 3V25Q2 26 3 26H10M6 8H17M6 13.500H13M6 19H10M14 25.500V21L22 11L25 14L17.500 24.500Z" /></svg> },
  { label: "预览", icon: <AiOutlinePlayCircle size={28} /> },
  { label: "组件", more: true, icon: <svg width="24" height="24" viewBox="0 0 24 24" fill="currentColor"><path d="M2 13h4.500v6H2zM9 8h4.500v11H9zM16.500 1H21v18h-4.500zM0 21h24v2H0z" /></svg> },
];

function Header() {
  return (
    <header className="flex h-[102px] shrink-0 items-center justify-between overflow-hidden border-b-2 border-[#f0f0f2] pl-[20px]">
      <h1 className="pt-[2px] text-[32px] font-semibold text-[#6b6b6b]">未命名报表1</h1>
      <div className="flex items-center gap-[44px]">
        {menu.map((m) => (
          <button key={m.label} type="button" className="flex items-center text-[28px] leading-[40px]">
            <span className="mr-[10px] flex w-[28px] justify-center text-[#808080]">{m.icon}</span>
            <span className="relative">
              {m.label}
              {m.dot && <span className="absolute -top-[1px] -right-[6px] size-[12px] rounded-full bg-[#f15b52]" />}
            </span>
            {m.more && <AiOutlineDown size={24} className="ml-[10px]" />}
          </button>
        ))}
        <button type="button" aria-label="配色" className="-mr-[18px] -ml-[24px] grid size-[60px] shrink-0 grid-cols-2 gap-[4px] rounded-[4px] border-2 border-[#d9d9dc] p-[6px]">
          <span className="bg-[#7579e7]" />
          <span className="bg-[#ea8d71]" />
          <span className="bg-[#f7c651]" />
          <span className="bg-[#8bd9c7]" />
        </button>
      </div>
    </header>
  );
}

/* ---------- component / dataset panel ---------- */

function TableIcon() {
  return (
    <svg width="28" height="26" viewBox="0 0 28 26" className="mt-1 shrink-0" fill="currentColor">
      <path fillRule="evenodd" d="M2 0H26Q28 0 28 2V24Q28 26 26 26H2Q0 26 0 24V2Q0 0 2 0ZM3 7V12.500H12.700V7ZM15.300 7V12.500H25V7ZM3 15.500V22.500H12.700V15.500ZM15.300 15.500V22.500H25V15.500Z" />
    </svg>
  );
}

function ColumnIcon() {
  return (
    <svg width="30" height="26" viewBox="0 0 30 26" className="mt-1 shrink-0" fill="currentColor">
      <path fillRule="evenodd" d="M2 0H28Q30 0 30 2V24Q30 26 28 26H2Q0 26 0 24V2Q0 0 2 0ZM2 4.500V24H14.200V4.500ZM15.800 4.500V24H28V4.500Z" />
    </svg>
  );
}

const columns = [
  "地区", "人口数", "2020年比重（%）", "2010年比重（%）", "男（%）", "女（%）", "0—14岁（%）", "15—59岁（%）",
  "60岁及以上（%）", "65岁及以上（%）", "大学（大专及以上）（人/10万人）", "高中（含中专）（人/10万人）",
  "初中（人/10万人）", "小学（人/10万人）", "受教育年限2020年", "受教育年限2010年",
];

function ComponentPanel() {
  const parent = "flex h-[64px] items-center gap-[14px] pl-[30px] text-left";
  return (
    <section className="relative flex w-[420px] shrink-0 flex-col overflow-hidden bg-[#eff0fe]">
      <CollapseArrows />
      <h2 className="flex h-[114px] items-center justify-center pb-[8px] text-[32px] font-medium">组件</h2>
      <div className="grid grid-cols-5 gap-x-[16px] gap-y-[28px] pr-[30px] pl-[16px]">
        {palette.map((p, i) => (
          <button
            key={p.name}
            type="button"
            title={p.name}
            className={i === 0 ? "flex h-[62px] items-center justify-center border-2 border-[#f6f7ff]" : "flex h-[62px] items-center justify-center"}
          >
            <svg width="48" height="48" viewBox="0 0 48 48" className="overflow-visible">{p.art}</svg>
          </button>
        ))}
      </div>
      <div className="mt-[45px] mr-[10px] flex flex-col overflow-hidden text-[28px] whitespace-nowrap">
        <button type="button" className={parent + " text-[#7579e7]"}>
          <TableIcon />
          第七次全国人口普查
        </button>
        <ul className="mt-[14px] mb-[12px]">
          {columns.map((c) => (
            <li key={c} className="flex h-[70px] items-center gap-[12px] pl-[46px]">
              <ColumnIcon />
              <span className="pb-[2px]">{c}</span>
            </li>
          ))}
        </ul>
        {["全国人口普查汇总表", "地区行政名称映射", "第七次人口普查（列..."].map((t) => (
          <button key={t} type="button" className={parent}>
            <TableIcon />
            {t}
          </button>
        ))}
      </div>
    </section>
  );
}

/* ---------- data panel ---------- */

function DropZone({ pill, left }: { pill?: string; left?: boolean }) {
  return (
    <div className="border-2 border-dashed border-[#d9d9d9]">
      {pill && (
        <button type="button" className="mx-[8px] mt-[8px] flex h-[56px] w-[calc(100%-16px)] items-center rounded-full bg-[#ea8d71] pr-[10px] text-white">
          <span className="flex-1 pl-[8px] text-center">{pill}</span>
          <AiOutlineDown size={18} />
        </button>
      )}
      <div className={left ? "flex h-[62px] items-center gap-[12px] pl-[10px] text-[#9c9c9c]" : "flex h-[60px] items-center justify-center gap-[12px] pb-[2px] text-[#9c9c9c]"}>
        <AiOutlinePlus size={22} />
        拖拽栏目到此处
      </div>
    </div>
  );
}

function FieldGroup({ label, pill }: { label: string; pill?: string }) {
  return (
    <div>
      <h4 className="flex h-[68px] items-center pt-[6px]">{label}</h4>
      <DropZone pill={pill} />
    </div>
  );
}

function GroupTitle({ children }: { children: React.ReactNode }) {
  return (
    <button type="button" className="flex h-[60px] items-center gap-[4px] pl-[22px]">
      <AiOutlineDown size={28} />
      {children}
    </button>
  );
}

function DataPanel() {
  return (
    <section className="relative w-[420px] shrink-0 text-[28px]">
      <CollapseArrows />
      <div className="mx-[10px] flex h-[84px] border-b-2 border-[#f0f0f0]" role="tablist">
        <button type="button" role="tab" aria-selected="true" className="-mb-[2px] h-[84px] w-[120px] border-b-4 border-[#ea8d71] pt-[14px] text-[#ea8d71]">数据</button>
        <button type="button" role="tab" aria-selected="false" className="ml-[95px] h-[82px] pt-[14px]">组件树</button>
      </div>
      <div className="pt-[36px]">
        <GroupTitle>数据栏</GroupTitle>
        <div className="mt-[20px] px-[42px]">
          <FieldGroup label="分组" pill="地区" />
          <FieldGroup label="值" pill="人口数" />
          <FieldGroup label="工具提示" />
          <FieldGroup label="视觉映射" />
        </div>
        <div className="mt-[52px]">
          <GroupTitle>图表过滤</GroupTitle>
          <div className="mt-[36px] px-[42px]">
            <DropZone left />
          </div>
        </div>
        <div className="mt-[148px]">
          <GroupTitle>全局过滤</GroupTitle>
          <div className="mt-[36px] px-[42px]">
            <DropZone left />
          </div>
        </div>
      </div>
    </section>
  );
}

/* ---------- settings panel ---------- */

function Switch({ on, label, id }: { on?: boolean; label: string; id?: string }) {
  return (
    <input
      id={id}
      type="checkbox"
      role="switch"
      aria-label={label}
      defaultChecked={on}
      className="relative h-[32px] w-[56px] shrink-0 appearance-none rounded-full bg-[#b1b4bc] before:absolute before:top-[4px] before:left-[4px] before:size-[24px] before:rounded-full before:bg-white before:shadow-[0_4px_8px_rgba(0,35,11,0.25)] checked:bg-[#ea8d71] checked:before:left-[28px]"
    />
  );
}

function Item({ label, on, plus, open }: { label: string; on?: boolean; plus?: boolean; open?: boolean }) {
  return (
    <div className="flex h-[68px] items-center pr-[22px] pl-[22px]">
      <button type="button" className="flex flex-1 items-center gap-[5px] pb-[4px]">
        {open ? <AiOutlineDown size={28} /> : <AiOutlineRight size={28} />}
        {label}
      </button>
      {on !== undefined && <Switch on={on} label={label} />}
      {plus && (
        <button type="button" aria-label={"添加" + label} className="ml-[2px]">
          <AiOutlinePlus size={26} />
        </button>
      )}
    </div>
  );
}

function Dropdown({ id, value, options }: { id: string; value: string; options?: string[] }) {
  return (
    <span className="relative flex h-[48px] min-w-0 flex-1">
      <select id={id} defaultValue={value} className="h-full w-full appearance-none rounded-[4px] border-2 border-[#d9d9d9] bg-white pl-[14px]">
        {[value, ...(options ?? [])].map((o) => (
          <option key={o} value={o}>{o}</option>
        ))}
      </select>
      <AiOutlineDown size={28} className="pointer-events-none absolute top-[10px] right-[20px] text-[#bfbfbf]" />
    </span>
  );
}

const row = "flex h-[74px] items-center";
const textInput = "min-w-0 rounded-[4px] border-2 border-[#d9d9d9] bg-white placeholder:text-[#bfbfbf]";
const textBtn = "h-[56px] w-[128px] rounded-[4px] border-2 border-[#d9d9d9] bg-white shadow-[0_4px_0_rgba(0,0,0,0.015)]";

function SettingsPanel() {
  return (
    <section className="relative flex w-[420px] shrink-0 flex-col bg-[#eff0fe] text-[28px]">
      <CollapseArrows />
      <div className="mx-[10px] flex h-[90px] shrink-0 text-[32px]" role="tablist">
        <button type="button" role="tab" aria-selected="true" className="h-[90px] w-[130px] border-b-4 border-[#ea8d71] pt-[18px] text-[#ea8d71]">配置</button>
        <button type="button" role="tab" aria-selected="false" className="h-[90px] flex-1 border-b-2 border-[#f1f1f3] pt-[16px] pr-[12px]">事件</button>
      </div>
      <Item label="数据" />
      <Item label="工具提示" on />
      <Item label="图例标签" on />
      <Item label="绘图网格" on={false} />
      <Item label="x轴" on open />
      <form className="px-[42px]" onSubmit={(e) => e.preventDefault()}>
        <button type="button" className="mt-[34px] ml-[16px] flex h-[39px] items-center text-[#7579e7]">恢复默认值</button>
        <div className={row}>
          <label htmlFor="axis-type">坐标轴类型：</label>
          <Dropdown id="axis-type" value="类目" />
        </div>
        <div className={row}>
          <label htmlFor="axis-name">名称：</label>
          <input id="axis-name" placeholder="名称" className={textInput + " h-[64px] flex-1 pl-[22px]"} />
        </div>
        <div className={row}>
          <label htmlFor="name-pos">名称显示位置：</label>
          <Dropdown id="name-pos" value="" />
        </div>
        <div className={row}>
          <label htmlFor="name-style">名称样式：</label>
          <button id="name-style" type="button" className={textBtn}>文</button>
        </div>
        <div className={row}>
          <label htmlFor="axis-pos">位置：</label>
          <Dropdown id="axis-pos" value="" />
        </div>
        <div className={row + " pr-[42px]"}>
          <label htmlFor="tick-min">刻度最小值：</label>
          <Dropdown id="tick-min" value="最..." />
        </div>
        <div className={row + " pr-[42px]"}>
          <label htmlFor="tick-max">刻度最大值：</label>
          <Dropdown id="tick-max" value="最..." />
        </div>

        <fieldset className="mt-[70px] min-w-0 border-2 border-[#d9d9d9] px-[8px] pt-[3px] pb-[26px]">
          <div className={row}>
            <label htmlFor="label-show">标签显示：</label>
            <Switch id="label-show" label="标签显示" on />
          </div>
          <div className={row}>
            <label htmlFor="label-format">标签格式：</label>
            <input id="label-format" placeholder="标签格式" className={textInput + " h-[48px] flex-1 pl-[14px]"} />
          </div>
          <div className={row}>
            <label htmlFor="label-gap">标签的显示间隔：</label>
          </div>
          <div className="relative mt-[3px] mb-[13px] flex">
            <Dropdown id="label-gap" value="显示所有标签" />
            <span className="pointer-events-none absolute -right-[15px] -left-[20px] -top-[34px] -bottom-[16px] rounded-[12px] border-[6px] border-[#ed4027]" />
          </div>
          <div className={row}>
            <label htmlFor="label-angle">刻度标签旋转的角度：</label>
          </div>
          <div className="relative mt-[3px]">
            <input id="label-angle" defaultValue="90" className={textInput + " block h-[48px] w-[180px] pl-[14px]"} />
            <span className="pointer-events-none absolute -top-[24px] -right-[60px] -bottom-[22px] -left-[30px] z-10 rounded-[14px] border-[6px] border-[#ed4027]" />
          </div>
        </fieldset>
        <div className="flex h-[64px] items-center">
          <label htmlFor="label-style">标签样式：</label>
          <button id="label-style" type="button" className={textBtn}>文</button>
        </div>
      </form>
      <div className="mt-[44px]">
        <Item label="y轴" on />
        <Item label="数据缩放1" on={false} plus />
        <Item label="图形1" on plus />
        <Item label="视觉映射1" on={false} plus />
      </div>
      <div className="mx-[10px] mt-[2px] flex items-center gap-[14px] border-t-2 border-[#f0f0f2] pt-[34px] pl-[12px]">
        <input
          type="range"
          aria-label="缩放"
          min="0"
          max="200"
          defaultValue="107"
          className="h-[8px] min-w-0 flex-1 appearance-none rounded-full bg-[linear-gradient(to_right,#ea8d71_50%,#fdeeea_50%)] [&::-webkit-slider-thumb]:size-[28px] [&::-webkit-slider-thumb]:appearance-none [&::-webkit-slider-thumb]:rounded-full [&::-webkit-slider-thumb]:border-4 [&::-webkit-slider-thumb]:border-[#fdeee6] [&::-webkit-slider-thumb]:bg-white"
        />
        <label className="flex h-[48px] w-[150px] items-center rounded-[4px] border-2 border-[#d9d9d9] bg-white pr-[15px] pl-[16px]">
          <input aria-label="缩放百分比" defaultValue="100" className="w-full min-w-0 bg-transparent" />
          %
        </label>
      </div>
    </section>
  );
}

/* ---------- canvas ---------- */

function Handle({ at }: { at: string }) {
  return <span className={"absolute size-[16px] bg-[#b1b1b1] shadow-[0_0_2px_rgba(0,0,0,0.2)] " + at} />;
}

function SelectionToolbar() {
  const icons: [string, React.ReactNode][] = [
    ["解锁", <AiOutlineUnlock size={28} />],
    ["刷新", <AiOutlineReload size={27} />],
    ["下移", <svg width="24" height="26" viewBox="0 0 24 26" fill="none" stroke="currentColor" strokeWidth="1.600"><path d="M12 1V20M4 13L12 21L20 13M1 25H23" /></svg>],
    ["上移", <svg width="24" height="26" viewBox="0 0 24 26" fill="none" stroke="currentColor" strokeWidth="1.600"><path d="M12 25V6M4 13L12 5L20 13M1 1H23" /></svg>],
    ["复制", <svg width="26" height="26" viewBox="0 0 26 26" fill="none" stroke="currentColor" strokeWidth="2.200"><rect x="2" y="2" width="18" height="18" rx="2.500" /><path d="M23.500 6V21Q23.500 24 20.500 24H6" /></svg>],
    ["剪切", <AiOutlineScissor size={28} />],
    ["格式刷", <svg width="24" height="26" viewBox="0 0 24 26" fill="none" stroke="currentColor" strokeWidth="1.800"><path d="M2 2H18V9H2ZM18 4.500H22V12.500H10.500V16M9 16H12V24.500H9Z" /></svg>],
    ["关闭", <AiOutlineClose size={24} />],
  ];
  return (
    <div className="absolute right-0 bottom-full flex h-[44px] w-[382px] items-center rounded-t-[12px] bg-[#b0b1b6]/90 px-[7px] pt-[2px] text-white">
      {icons.map(([name, icon]) => (
        <button key={name} type="button" aria-label={name} className="flex flex-1 justify-center">{icon}</button>
      ))}
    </div>
  );
}

function Canvas() {
  return (
    <main className="flex min-w-0 flex-1 flex-col overflow-hidden border-l-2 border-[#f0f0f2]">
      <div className="flex shrink-0 items-stretch justify-between border-b-2 border-[#f0f0f2] bg-white">
        <button type="button" className="h-[76px] rounded-t-[4px] bg-[#ea8d71] px-[32px] text-[28px] text-white">新页面</button>
        <button type="button" aria-label="添加页面" className="-mr-[19px] flex size-[40px] items-center justify-center self-center rounded-[4px] border-2 border-[#ea8d71] text-[#ea8d71]">
          <AiOutlinePlus size={26} />
        </button>
      </div>
      <div className="mt-[2px] ml-[26px] flex flex-1 flex-col border-l-2 border-dashed border-[#d9d9db] pr-[12px] pl-[20px]">
        <article className="grid h-[758px] shrink-0 border-2 border-t-0 border-dashed border-[#d9d9db] bg-white">
          <div className="justify-self-center pr-[12px] [grid-area:1/1]">
            <ChinaMap />
          </div>
          <ul className="flex flex-col gap-[20px] self-end pb-[8px] pl-[10px] text-[24px] leading-[28px] text-[#3d3d3d] [grid-area:1/1]">
            {mapLegend.map((l) => (
              <li key={l.label} className="flex items-center gap-[20px]">
                <span className={"h-[28px] w-[30px] rounded-[6px] " + l.box} />
                {l.label}
              </li>
            ))}
          </ul>
        </article>

        <div className="mt-[40px] flex shrink-0 border-r-2 border-dashed border-[#d9d9db]">
          <article className="relative flex flex-1 flex-col border-2 border-[#fae3a0] bg-white">
            <SelectionToolbar />
            <div className="flex h-[57px] shrink-0 items-center justify-between pr-[12px] pb-[8px] pl-[10px]">
              <div className="flex items-center gap-[11px] text-[24px] text-[#757575]">
                <span className="h-[28px] w-[50px] rounded-[6px] bg-[#7579e7]" />
                人口数
              </div>
              <div className="flex items-center gap-[24px] text-[#999999]">
                <button type="button" aria-label="数据">
                  <svg width="25" height="29" viewBox="0 0 25 29" fill="none" stroke="currentColor" strokeWidth="1.500">
                    <ellipse cx="12.500" cy="6" rx="11" ry="5" /><path d="M1.500 6V23C1.500 26 6 28 12.500 28S23.500 26 23.500 23V6M1.500 11C1.500 14 6 16 12.500 16S23.500 14 23.500 11M1.500 17C1.500 20 6 22 12.500 22S23.500 20 23.500 17" />
                  </svg>
                </button>
                <button type="button" aria-label="全屏">
                  <svg width="24" height="24" viewBox="0 0 24 24" fill="none" stroke="currentColor" strokeWidth="1.800">
                    <path d="M1 8V1H7M17 1H23V8M23 16V23H17M7 23H1V16" />
                  </svg>
                </button>
              </div>
            </div>
            <BarChart />
            <Handle at="-top-[9px] -left-[9px]" />
            <Handle at="-top-[9px] left-1/2 -ml-[8px]" />
            <Handle at="-top-[9px] -right-[9px]" />
            <Handle at="top-1/2 -mt-[8px] -left-[9px]" />
            <Handle at="top-1/2 -mt-[8px] -right-[9px]" />
            <Handle at="-bottom-[9px] -left-[9px]" />
            <Handle at="-bottom-[9px] left-1/2 -ml-[8px]" />
            <Handle at="-bottom-[9px] -right-[9px]" />
          </article>
        </div>

        <article className="mt-[40px] flex-1 border-2 border-b-0 border-dashed border-[#d9d9db]" />
      </div>
    </main>
  );
}

export default function App() {
  return (
    <div className="relative flex h-screen overflow-hidden bg-[#f9faff] font-['Inter','Noto_Sans_CJK_SC',sans-serif] leading-normal text-[#6e6e6e] [text-spacing-trim:space-all]">
      <Rail />
      <div className="flex min-w-0 flex-1 flex-col">
        <Header />
        <div className="flex min-h-0 flex-1">
          <ComponentPanel />
          <DataPanel />
          <SettingsPanel />
          <div className="w-[6px] shrink-0 bg-white" />
          <Canvas />
        </div>
      </div>
      <div className="pointer-events-none absolute inset-y-0 right-0 w-[16px] bg-gradient-to-r from-transparent to-black/5" />
    </div>
  );
}
